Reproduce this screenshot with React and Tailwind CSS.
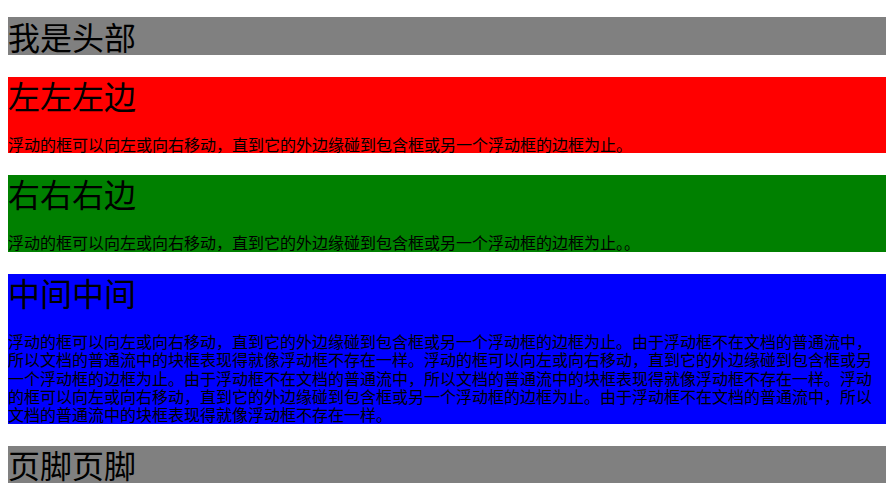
const para =
  '浮动的框可以向左或向右移动，直到它的外边缘碰到包含框或另一个浮动框的边框为止。由于浮动框不在文档的普通流中，所以文档的普通流中的块框表现得就像浮动框不存在一样。';

const sections = [
  { title: '左左左边', bg: 'bg-[#ff0000]', text: '浮动的框可以向左或向右移动，直到它的外边缘碰到包含框或另一个浮动框的边框为止。' },
  { title: '右右右边', bg: 'bg-[#008000]', text: '浮动的框可以向左或向右移动，直到它的外边缘碰到包含框或另一个浮动框的边框为止。。' },
  { title: '中间中间', bg: 'bg-[#0000ff]', text: para + para + para },
];

export default function App() {
  return (
    <div className="min-h-screen bg-white text-black font-['Noto_Sans_CJK_SC',sans-serif]">
      <div className="w-[878px] ml-[8px] pt-[17px] flex flex-col gap-[22px]">
        {/* 头部 */}
        <div className="bg-[#808080] h-[38px]">
          <h1 className="text-[32px] leading-[38px] font-normal">我是头部</h1>
        </div>

        {sections.map((s) => (
          <div key={s.title} className={s.bg}>
            <h1 className="text-[32px] leading-[37px] font-normal">{s.title}</h1>
            <p className="mt-[21px] text-[16px] leading-[18.4px]">{s.text}</p>
          </div>
        ))}

        {/* 页脚 */}
        <div className="bg-[#808080] h-[37px]">
          <h1 className="text-[32px] leading-[37px] font-normal">页脚页脚</h1>
        </div>
      </div>
    </div>
  );
}
